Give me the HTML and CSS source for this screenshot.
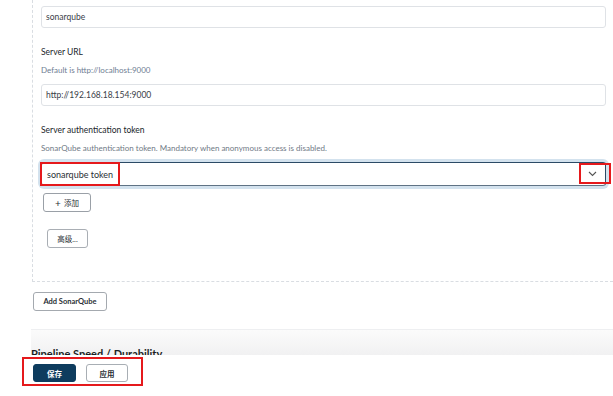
FILE: index.html
```html
<!DOCTYPE html>
<html lang="zh">
<head>
<meta charset="utf-8">
<title>SonarQube servers</title>
<link rel="stylesheet" href="styles.css">
</head>
<body>
<div class="page">
  <div class="chunk">
    <div class="text-input first">sonarqube</div>
    <div class="label">Server URL</div>
    <div class="help url-help">Default is http://localhost:9000</div>
    <div class="text-input">http://192.168.18.154:9000</div>
    <div class="label">Server authentication token</div>
    <div class="help">SonarQube authentication token. Mandatory when anonymous access is disabled.</div>
    <div class="select">
      <span>sonarqube token</span>
      <svg class="chevron" width="9" height="6" viewBox="0 0 9 6"><path d="M1 1 L4.5 4.5 L8 1" fill="none" stroke="#555" stroke-width="1.1"/></svg>
    </div>
    <div class="row"><button class="btn btn-add"><span class="plus">+</span> 添加</button></div>
    <div class="row"><button class="btn btn-adv">高级...</button></div>
  </div>
  <div class="row"><button class="btn btn-sonar">Add SonarQube</button></div>
  <div class="separator"></div>
  <div class="fade"><h2 class="section-title">Pipeline Speed / Durability</h2></div>
</div>
<div class="bottom-bar">
  <button class="btn btn-save">保存</button>
  <button class="btn btn-apply">应用</button>
</div>
<div class="mark mark-token"></div>
<div class="mark mark-arrow"></div>
<div class="mark mark-buttons"></div>
</body>
</html>
```
FILE: styles.css
```css
html, body {
  margin: 0;
  padding: 0;
  background: #ffffff;
  font-family: Lato, "Noto Sans CJK SC", sans-serif;
  color: #1b1f24;
  overflow: hidden;
}
.page {
  padding-left: 32px;
}
.chunk {
  border-left: 1px dashed #d9dde2;
  border-bottom: 1px dashed #d9dde2;
  padding: 6px 7px 33px 8px;
}
.text-input {
  height: 20px;
  border: 1px solid #dfe2e6;
  border-radius: 3px;
  box-sizing: content-box;
  padding: 0 4px;
  font-size: 8.5px;
  line-height: 20px;
  color: #3a4048;
}
.label {
  margin-top: 17px;
  font-size: 8.5px;
  line-height: 14px;
  font-weight: 400;
  color: #20252b;
}
.help {
  margin-top: 5px;
  margin-bottom: 8px;
  font-size: 8px;
  line-height: 12px;
  color: #707a86;
}
.url-help {
  color: #6e7d92;
}
.select {
  height: 22px;
  border: 1px solid #2b4a66;
  border-bottom-color: #5f7284;
  border-radius: 3px;
  box-shadow: 0 0 0 3px #d3e2ee;
  display: flex;
  align-items: center;
  justify-content: space-between;
  padding: 0 6px 0 5px;
  font-size: 9px;
  color: #2a2f35;
}
.chevron {
  margin-right: 2px;
}
.row {
  display: flex;
}
.btn {
  font-family: Lato, "Noto Sans CJK SC", sans-serif;
  background: #ffffff;
  border: 1px solid #9aa0a7;
  border-radius: 3px;
  height: 19px;
  padding: 0;
  font-size: 7.5px;
  color: #2a2f35;
  display: flex;
  align-items: center;
  justify-content: center;
}
.btn-add {
  margin-top: 7px;
  margin-left: 2px;
  width: 48px;
  gap: 3px;
}
.plus {
  font-size: 10px;
  line-height: 1;
}
.btn-adv {
  margin-top: 17px;
  margin-left: 6px;
  width: 41px;
  border-color: #a9aeb4;
}
.btn-sonar {
  margin-top: 10px;
  margin-left: 1px;
  width: 74px;
  font-weight: 700;
  font-size: 7.5px;
  border-color: #a4a9af;
}
.separator {
  margin-top: 18px;
  margin-left: -1px;
  height: 1px;
  background: #eeeff1;
}
.fade {
  height: 25px;
  overflow: hidden;
  margin-left: -1px;
  background: linear-gradient(#fbfbfb, #f1f1f2);
}
.section-title {
  margin: 0;
  padding-top: 17px;
  font-size: 11px;
  line-height: 14px;
  font-weight: 700;
  color: #1b1f24;
}
.bottom-bar {
  height: 41px;
  box-sizing: border-box;
  padding: 9px 0 0 33px;
  display: flex;
  gap: 10px;
  background: #ffffff;
}
.btn-save {
  width: 43px;
  height: 18px;
  background: #0e3c5e;
  border-color: #0e3c5e;
  color: #ffffff;
  font-weight: 700;
  font-size: 7.5px;
}
.btn-apply {
  width: 42px;
  height: 18px;
  border-color: #a8aeb4;
  font-weight: 700;
  font-size: 7.5px;
}
.mark {
  position: absolute;
  border: 2px solid #e5191c;
  box-sizing: border-box;
}
.mark-token {
  left: 40px;
  top: 162px;
  width: 80px;
  height: 24px;
}
.mark-arrow {
  left: 579px;
  top: 163px;
  width: 32px;
  height: 21px;
}
.mark-buttons {
  left: 22px;
  top: 357px;
  width: 121px;
  height: 29px;
}
```
